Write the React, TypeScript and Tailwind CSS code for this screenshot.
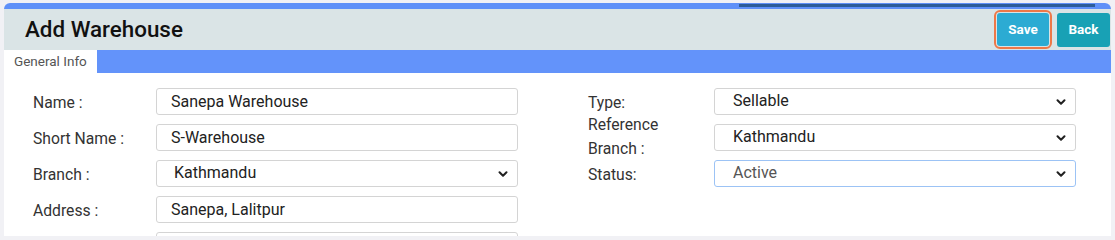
import { ChevronDown } from "lucide-react";

const FONT = { fontFamily: "Roboto, 'Liberation Sans', sans-serif" };

function TextField({ label, value }: { label: string; value: string }) {
  return (
    <div className="flex items-center h-[36px]">
      <label className="w-[123px] shrink-0 text-[15.7px] text-[#333] leading-[20px] pt-[3px]">{label}</label>
      <input
        readOnly
        value={value}
        className="flex-1 h-[27px] border border-[#d4d4d4] rounded-[3px] px-[14px] text-[16px] text-[#222] bg-white outline-none"
      />
    </div>
  );
}

function SelectBox({ value, focused, indent }: { value: string; focused?: boolean; indent: string }) {
  return (
    <div className="relative flex-1">
      <select
        value={value}
        onChange={() => {}}
        className={`appearance-none w-full h-[27px] rounded-[3px] ${indent} text-[16px] bg-white outline-none border ${
          focused ? "border-[#9cc3f5] text-[#555]" : "border-[#d4d4d4] text-[#222]"
        }`}
      >
        <option>{value}</option>
      </select>
      <ChevronDown
        size={14}
        strokeWidth={3.5}
        className="absolute right-[8px] top-[7px] text-[#222] pointer-events-none"
      />
    </div>
  );
}

export default function App() {
  return (
    <div className="w-[1115px] h-[240px] bg-[#f1f1f5] pt-[3px] pl-[4px]" style={FONT}>
      <div className="w-[1107px] h-[233px] bg-white rounded-t-[6px] overflow-hidden">
        {/* top bar with progress line */}
        <div className="h-[6px] bg-[#5f90f8] flex items-start">
          <div className="ml-[735px] mt-[1px] w-[356px] h-[3px] bg-[#2d5c99]" />
        </div>

        {/* Header */}
        <div className="h-[41px] bg-[#dae4e6] flex items-center justify-between pl-[21px] pr-[1px]">
          <h1 className="text-[22.4px] font-medium text-[#111]">Add Warehouse</h1>
          <div className="flex items-center gap-[5px]">
            <div className="rounded-[6px] border-2 border-[#ee7848] p-[1px]">
              <button className="h-[33px] w-[52px] rounded-[3px] bg-[#2cabd3] text-white text-[13.5px] font-bold">
                Save
              </button>
            </div>
            <button className="h-[34px] w-[53px] rounded-[3px] bg-[#18a1b5] text-white text-[13.5px] font-bold">
              Back
            </button>
          </div>
        </div>

        {/* Tabs */}
        <div className="h-[23px] bg-[#6393fa] flex">
          <div className="w-[93px] bg-white text-[13.5px] text-[#555] flex items-center pl-[10px]">General Info</div>
        </div>

        {/* Form */}
        <div className="flex gap-x-[70px] pl-[29px] pt-[10px]">
          <div className="w-[485px] flex flex-col">
            <TextField label="Name :" value="Sanepa Warehouse" />
            <TextField label="Short Name :" value="S-Warehouse" />
            <div className="flex items-center h-[36px]">
              <label className="w-[123px] shrink-0 text-[15.7px] text-[#333] leading-[20px] pt-[3px]">Branch :</label>
              <SelectBox value="Kathmandu" indent="pl-[17px]" />
            </div>
            <TextField label="Address :" value="Sanepa, Lalitpur" />
            <TextField label="" value="" />
          </div>
          <div className="w-[488px] flex flex-col">
            <div className="flex items-center h-[36px]">
              <label className="w-[126px] shrink-0 text-[15.7px] text-[#333] leading-[20px] pt-[3px]">Type:</label>
              <SelectBox value="Sellable" indent="pl-[18px]" />
            </div>
            <div className="flex items-center h-[36px]">
              <label className="w-[126px] shrink-0 text-[15.7px] text-[#333] leading-[24px]">
                Reference
                <br />
                Branch :
              </label>
              <SelectBox value="Kathmandu" indent="pl-[18px]" />
            </div>
            <div className="flex items-center h-[36px]">
              <label className="w-[126px] shrink-0 text-[15.7px] text-[#333] leading-[20px] pt-[3px]">Status:</label>
              <SelectBox value="Active" indent="pl-[18px]" focused />
            </div>
          </div>
        </div>
      </div>
    </div>
  );
}
